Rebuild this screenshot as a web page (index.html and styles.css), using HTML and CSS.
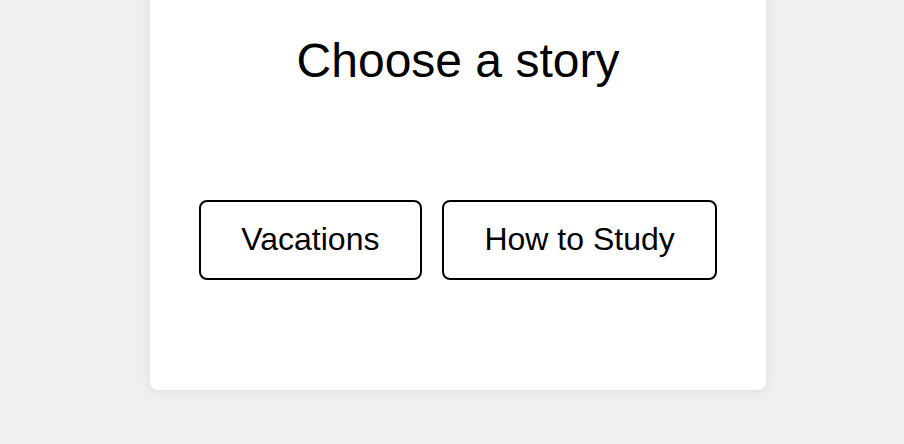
FILE: index.html
```html
<!DOCTYPE html>
<html lang="en">
<head>
<meta charset="utf-8">
<title>Choose a story</title>
<link rel="stylesheet" href="styles.css">
</head>
<body>
  <main class="card">
    <h1 class="title">Choose a story</h1>
    <div class="choices">
      <button class="choice" type="button">Vacations</button>
      <button class="choice" type="button">How to Study</button>
    </div>
  </main>
</body>
</html>
```
FILE: styles.css
```css
html, body {
  margin: 0;
  padding: 0;
}

body {
  background: #f0f0f0;
  font-family: "Liberation Sans", Arial, Helvetica, sans-serif;
  color: #000;
  height: 444px;
  overflow: hidden;
}

.card {
  box-sizing: border-box;
  width: 616px;
  margin: -20px 0 0 150px;
  padding: 53px 0 110px;
  background: #fff;
  border-radius: 8px;
  box-shadow: 0 2px 14px rgba(0, 0, 0, 0.08);
}

.title {
  margin: 0;
  font-size: 48px;
  font-weight: normal;
  text-align: center;
  line-height: normal;
}

.choices {
  display: flex;
  justify-content: center;
  gap: 20px;
  margin-top: 112px;
}

.choice {
  font-family: "Liberation Sans", Arial, Helvetica, sans-serif;
  font-size: 32px;
  line-height: normal;
  color: #000;
  background: #fff;
  border: 2px solid #000;
  border-radius: 8px;
  padding: 18.5px 40.5px 20.5px;
  margin: 0;
  cursor: pointer;
}
```
